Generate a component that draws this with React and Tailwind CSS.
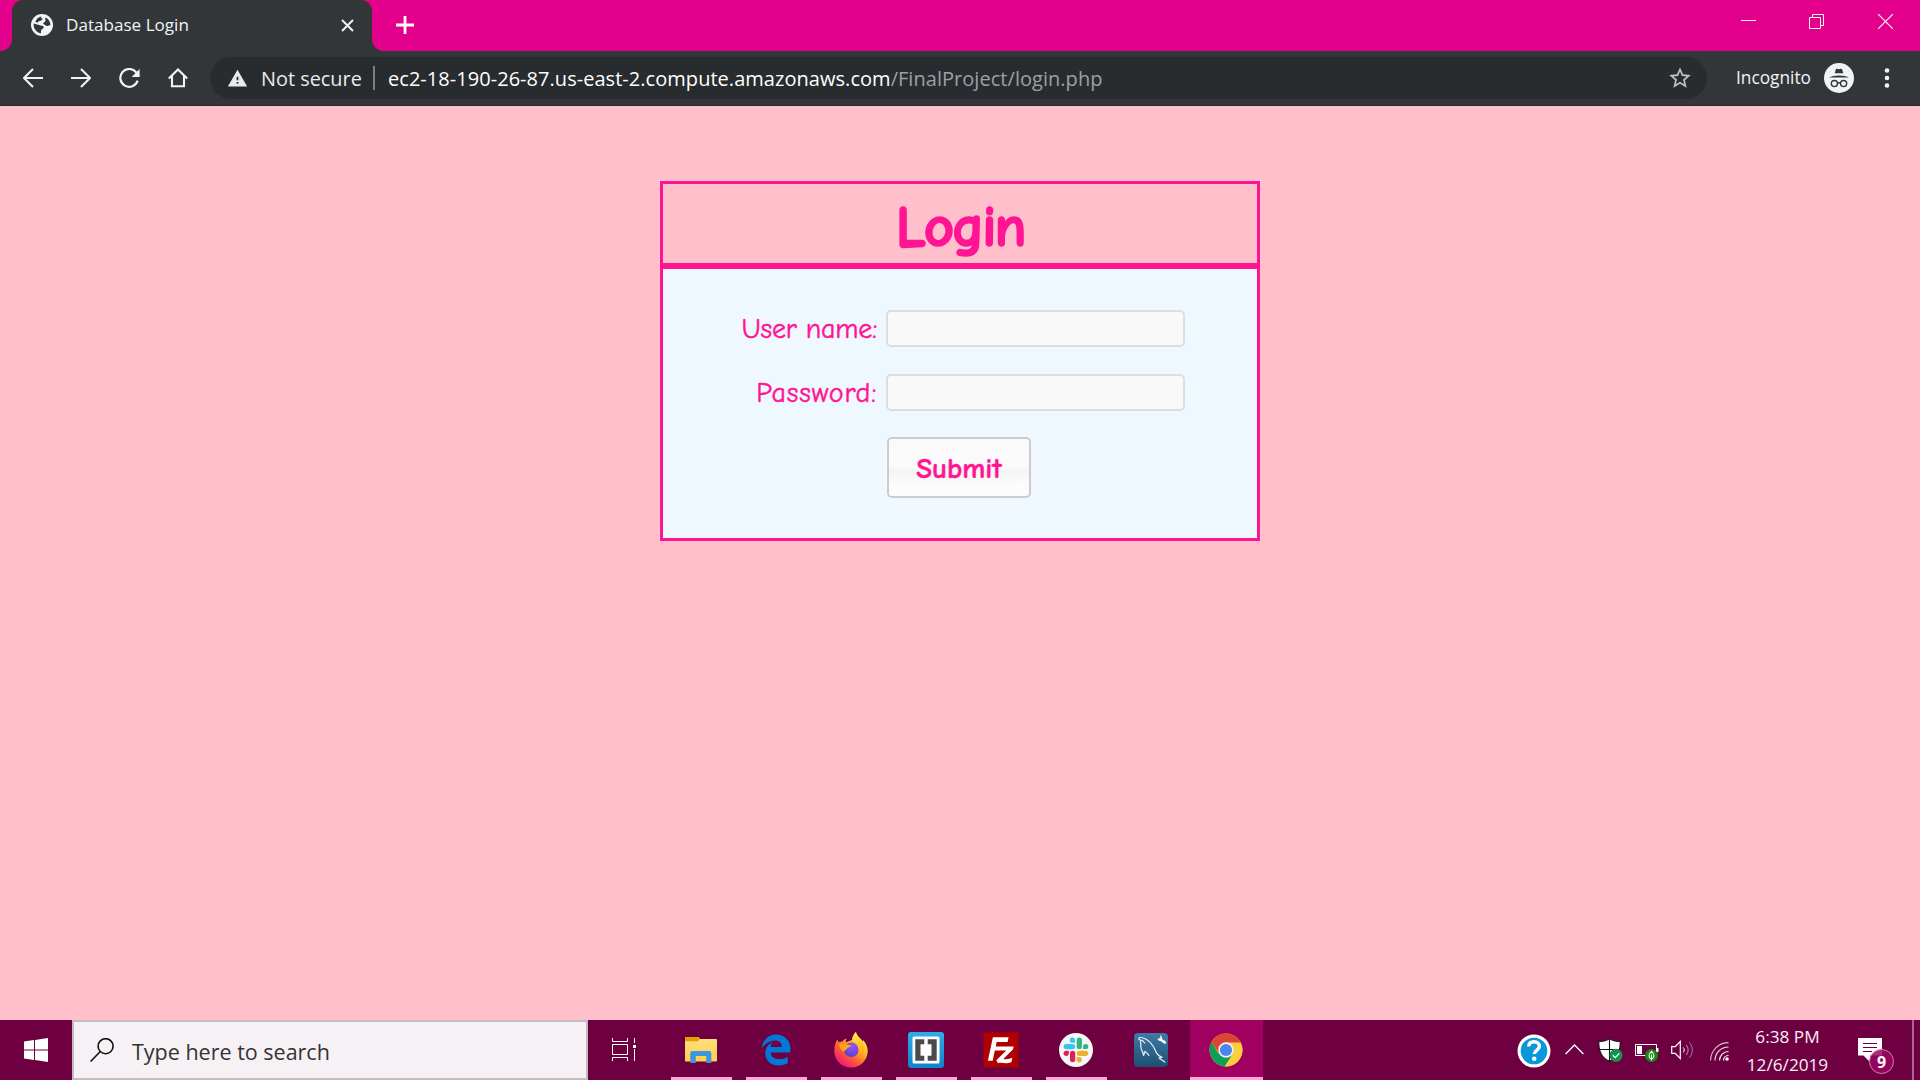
import React from "react";
import { MdStarBorder, MdWarning } from "react-icons/md";
import { FaEdgeLegacy } from "react-icons/fa6";
import { SiFilezilla } from "react-icons/si";

/* ---------- browser chrome icons ---------- */

const Globe = () => (
  <svg width="22" height="22" viewBox="0 0 22 22">
    <circle cx="11" cy="11" r="11" fill="#f1f3f4" />
    <path d="M10.2 2.4c-.3 1.3.2 2 1.4 2.2-.2 1.8-1.500 2.300-3.200 2.300-1 .2-1.200 1.300-2 1.600l-2-.6C5.200 5 7.500 2.900 10.200 2.400Z" fill="#323639" />
    <path d="M2.600 9.600 7 10.700c1.400.3 2.600 1 4.300 1 1.500.2 1.700 1.500.9 2.500-.9 1-2.200 1.300-2.200 2.500v2.600C5.600 19 2.200 14.600 2.600 9.600Z" fill="#323639" />
    <path d="M14.500 3.400c3 1.300 5 4.200 4.900 7.600l-2.400.8c-1.200.4-2 .2-2.600-.5-.6-1.200-2-.6-2.300-1.800.2-1.400 2-1.300 2.400-2.500.3-1.300-.8-2.200 0-3.600Z" fill="#323639" />
  </svg>
);

const Back = () => (
  <svg width="20" height="20" viewBox="0 0 20 20" fill="none" stroke="#f1f3f4" strokeWidth="2.100">
    <path d="M10 .9.900 10l9.100 9.100M1.300 10H20" />
  </svg>
);

const Forward = () => (
  <svg width="20" height="20" viewBox="0 0 20 20" fill="none" stroke="#f1f3f4" strokeWidth="2.100">
    <path d="M10 .9 19.100 10 10 19.100M18.700 10H0" />
  </svg>
);

const Reload = () => (
  <svg width="21" height="20" viewBox="0 0 21 20">
    <path d="M17.400 4.600A8.900 8.900 0 1 0 18.700 12.600" fill="none" stroke="#f1f3f4" strokeWidth="2.200" />
    <path d="M20.600 1v8h-8Z" fill="#f1f3f4" />
  </svg>
);

const Home = () => (
  <svg width="20" height="20" viewBox="0 0 20 20" fill="none" stroke="#f1f3f4" strokeWidth="2.100">
    <path d="M.8 10.500 10 1.500l9.200 9M4 8v10.300h12V8" />
  </svg>
);

const Incognito = () => (
  <svg width="30" height="30" viewBox="0 0 30 30">
    <circle cx="15" cy="15" r="15" fill="#f1f3f4" />
    <path d="M10.700 10.200 11.800 6.500c.2-.7.700-.9 1.300-.7l1.900.5 1.900-.5c.6-.2 1.100 0 1.300.7l1.100 3.700Z" fill="#323639" />
    <path d="M5 14.600c2-1.500 6-2.200 10-2.200s8 .7 10 2.200Z" fill="#323639" />
    <g fill="none" stroke="#323639" strokeWidth="1.300">
      <circle cx="10.400" cy="20.600" r="3.100" />
      <circle cx="19.600" cy="20.600" r="3.100" />
      <path d="M13.500 20.300c1-.7 2-.7 3 0" />
    </g>
  </svg>
);

/* ---------- taskbar icons ---------- */

const WindowsLogo = () => (
  <svg width="24" height="24" viewBox="0 0 24 24" fill="#fff">
    <path d="M0 3.400 10 2v9.500H0ZM11 1.900 24 0v11.500H11ZM0 12.500h10V22L0 20.600ZM11 12.500h13V24l-13-1.900Z" />
  </svg>
);

const SearchGlass = () => (
  <svg width="24" height="24" viewBox="0 0 24 24" fill="none" stroke="#111" strokeWidth="1.600">
    <circle cx="15.600" cy="8.200" r="7.500" />
    <path d="M10.300 13.500.6 23.500" />
  </svg>
);

const TaskView = () => (
  <svg width="25" height="24" viewBox="0 0 25 24" fill="none" stroke="#fff" strokeWidth="1">
    <path d="M.5 0v3.500h15V0M.5 6.500h15v10H.5zM.5 23v-3.500h15V23M22.500 0v5M22.500 11v12" />
    <rect x="21" y="7" width="3" height="3" fill="#fff" stroke="none" />
  </svg>
);

const Explorer = () => (
  <svg width="32" height="26" viewBox="0 0 32 26">
    <defs>
      <linearGradient id="folder" x1="0" y1="0" x2="0" y2="1">
        <stop offset="0" stopColor="#ffe082" />
        <stop offset="1" stopColor="#ffcf4b" />
      </linearGradient>
    </defs>
    <path d="M1 0h12.500l1.500 2h16a1 1 0 0 1 1 1v20.500a1 1 0 0 1-1 1H1a1 1 0 0 1-1-1V1a1 1 0 0 1 1-1Z" fill="url(#folder)" />
    <path d="M1 0h12.500l1.300 2-1.800 2.200H0V1a1 1 0 0 1 1-1Z" fill="#e2a100" />
    <path d="M5.300 26V16a2 2 0 0 1 2-2h17a2 2 0 0 1 2 2v10h-5.100v-7H10.800v7Z" fill="#3a96dd" />
  </svg>
);

const Firefox = () => (
  <svg width="34" height="36" viewBox="0 0 34 36">
    <defs>
      <linearGradient id="ffbody" x1=".85" y1=".1" x2=".2" y2=".95">
        <stop offset="0" stopColor="#fff44f" />
        <stop offset=".35" stopColor="#ffb21f" />
        <stop offset=".65" stopColor="#ff5a36" />
        <stop offset="1" stopColor="#f0117c" />
      </linearGradient>
      <radialGradient id="ffcore" cx=".6" cy=".2" r=".9">
        <stop offset="0" stopColor="#a24bff" />
        <stop offset=".6" stopColor="#6e4be0" />
        <stop offset="1" stopColor="#4a3fb8" />
      </radialGradient>
      <linearGradient id="ffflame" x1="0" y1="0" x2="0" y2="1">
        <stop offset="0" stopColor="#fff44f" />
        <stop offset="1" stopColor="#ff980e" />
      </linearGradient>
    </defs>
    <path d="M3.500 7.200c.2 1.400.6 2.200 1.300 3 1-.6 2.300-.8 3.700-.6 1-1.700 2.500-2.800 4.300-3.200-1 1.300-1.200 2.700-.8 3.800L18 8c.4-3.300 1.800-6.200 4-8 .4 3.200 2.500 4.800 4.800 7 .8.900 1.500 1.900 2 3 .2-.9.100-1.500-.1-2.300 2.900 2.700 5 7 5 11.300C33.700 28 26.500 35.500 17 35.500S.3 28 .3 19c0-4.500 1-8.800 3.200-11.800Z" fill="url(#ffbody)" />
    <circle cx="17.300" cy="17.800" r="7.200" fill="url(#ffcore)" />
    <path d="M5 12.500c4-2 8 .3 12.500.8-.5 2.200-4.300 2-4.500 3.500 0 1.400-2.800 1.200-3.500 3.200C7 18 5.500 15 5 12.500Z" fill="#ffa61c" />
    <path d="M18 9.500C18.300 5.500 19.500 2 22 0c.4 3.200 2.500 4.800 4.800 7 4 4.300 4.300 10.500 1.500 16 .2-7-3-12.500-10.300-13.500Z" fill="url(#ffflame)" />
  </svg>
);

const Brackets = () => (
  <svg width="36" height="36" viewBox="0 0 36 36">
    <defs>
      <linearGradient id="brk" x1="0" y1="0" x2="0" y2="1">
        <stop offset="0" stopColor="#2eaee8" />
        <stop offset="1" stopColor="#0f83c9" />
      </linearGradient>
    </defs>
    <rect width="36" height="36" rx="3" fill="url(#brk)" />
    <rect x="4.500" y="4.500" width="27" height="27" rx="1.500" fill="#fff" />
    <path d="M7.300 7.300h9v5h-3.800v11.400h3.800v5h-9ZM28.700 7.300h-9v5h3.800v11.400h-3.800v5h9Z" fill="#4a4a4a" />
  </svg>
);

const FileZilla = () => (
  <div className="grid size-9 place-items-center bg-[linear-gradient(#fff,#fff)] bg-[length:30px_30px] bg-center bg-no-repeat">
    <SiFilezilla className="size-9 text-[#b00000]" />
  </div>
);

const Slack = () => (
  <svg width="34" height="34" viewBox="0 0 34 34">
    <circle cx="17" cy="17" r="17" fill="#f6f6f6" />
    <g fill="#36c5f0">
      <rect x="4.600" y="11" width="11.500" height="5.200" rx="2.600" />
      <path d="M16 9.800h-2.600A2.600 2.600 0 1 1 16 7.200Z" />
    </g>
    <g fill="#2eb67d">
      <rect x="17.700" y="4.600" width="5.200" height="11.500" rx="2.600" />
      <path d="M24.100 16.100v-2.600a2.600 2.600 0 1 1 2.600 2.600Z" />
    </g>
    <g fill="#ecb22e">
      <rect x="17.700" y="17.700" width="11.500" height="5.200" rx="2.600" />
      <path d="M17.700 24.100h2.600a2.600 2.600 0 1 1-2.600 2.600Z" />
    </g>
    <g fill="#e01e5a">
      <rect x="11" y="17.700" width="5.200" height="11.500" rx="2.600" />
      <path d="M9.800 17.700v2.600a2.600 2.600 0 1 1-2.600-2.600Z" />
    </g>
  </svg>
);

const Workbench = () => (
  <svg width="34" height="34" viewBox="0 0 34 34">
    <defs>
      <linearGradient id="wb" x1="0" y1="0" x2="0" y2="1">
        <stop offset="0" stopColor="#3f7ba5" />
        <stop offset="1" stopColor="#1d5073" />
      </linearGradient>
    </defs>
    <rect width="34" height="34" rx="4" fill="url(#wb)" />
    <g fill="none" stroke="#e6eef4" strokeWidth="1.200" strokeLinecap="round" strokeLinejoin="round">
      <path d="M9.500 8.500C7.500 6.800 5.500 7.500 4.800 6c-.5-1.200.8-1.800 2.500-1.500 5.500.8 8.500 3.500 12 9 1.600 2.700 2.200 5.500 4.400 8 1.300 1.500 3 2 4.300 2.800l-3 .7c1.800 1.400 4.300 2.300 5.800 4.200" />
      <path d="M6.500 8.200c.8 3-.4 6.500 1.200 9 .9 1.600 1.400 2.400 1.900 5.300l1.400-4.200c1.500 1.500 2.700 2.600 3.800 4" />
    </g>
    <circle cx="10.500" cy="9.700" r=".8" fill="#e6eef4" />
    <path d="m26.200 6.200 4.600 3.200" stroke="#fff" strokeWidth="2.600" strokeLinecap="round" />
    <path d="M26 2.300c1.700.5 2.400 2 1.900 3.700-.8 1.700-2.600 2.100-4 1.100l-.2-1.500 1.900.3.900-1.300Z" fill="#fff" />
  </svg>
);

const Chrome = () => (
  <svg width="34" height="34" viewBox="0 0 34 34">
    <circle cx="17" cy="17" r="16.500" fill="#fbc934" />
    <path d="M17 17 9.500 20.800 2.710 8.750A16.500 16.500 0 0 0 15.500 33.430L24 21Z" fill="#0f9d58" />
    <path d="M17 9.400h14.650A16.500 16.500 0 0 1 16.500 33.490L23.600 20.800Z" fill="#fbcf3b" />
    <path d="M2.710 8.750A16.500 16.500 0 0 1 31.650 9.400H17L9.500 13.500l1 7.500Z" fill="#db4437" />
    <circle cx="17" cy="17" r="7.700" fill="#f1f1f1" />
    <circle cx="17" cy="17" r="6.100" fill="#4a86f0" />
  </svg>
);

const Help = () => (
  <svg width="34" height="34" viewBox="0 0 34 34">
    <circle cx="17" cy="17" r="16.500" fill="#fff" />
    <circle cx="17" cy="17" r="13.300" fill="#0a97d9" />
    <path d="M11.700 12.500c.2-3 2.300-4.700 5.300-4.700 3.200 0 5.400 1.800 5.400 4.500 0 3.800-4.900 3.800-5.100 7.700" fill="none" stroke="#fff" strokeWidth="3.400" />
    <circle cx="17.200" cy="24.700" r="2.300" fill="#fff" />
  </svg>
);

const Defender = () => (
  <svg width="25" height="24" viewBox="0 0 25 24">
    <path d="M11.500.6C9 2.700 5 3.600.9 3.400c-.4 8.600 2.300 16.300 10.600 19.800C19.800 19.700 22.500 12 22.100 3.400 18 3.600 14 2.700 11.500.6Z" fill="#fff" stroke="#111" strokeWidth="1" />
    <path d="M11.500.6v22.600M.9 11.500h21.200" stroke="#111" strokeWidth="1.100" />
    <circle cx="18" cy="17.300" r="6.500" fill="#179150" />
    <path d="m14.800 17.300 2.400 2.400 4.200-4.300" fill="none" stroke="#fff" strokeWidth="1.300" />
  </svg>
);

const Battery = () => (
  <svg width="24" height="18" viewBox="0 0 24 18">
    <path d="M.5.500h21v11H.500z" fill="none" stroke="#fff" />
    <path d="M2 2h5v8H2z" fill="#fff" />
    <path d="M22 4h1.500v4H22z" fill="#fff" />
    <circle cx="16.500" cy="11.500" r="6.500" fill="#128a12" />
    <path d="M16.500 7.300c3.300 3 3.300 6 0 8-3.300-2-3.300-5 0-8ZM16.500 10.500v6" fill="none" stroke="#fff" strokeWidth="1.100" />
  </svg>
);

const Speaker = () => (
  <svg width="24" height="20" viewBox="0 0 24 20" fill="none" stroke="#fff">
    <path d="M.7 6.700h3.500L9.300 1.500v17L4.200 13.400H.700Z" strokeWidth="1.200" />
    <path d="M12.300 7.500c1.200 1.500 1.200 3.500 0 5" />
    <path d="M15.200 5c2.500 3 2.500 7 0 10" opacity=".6" />
    <path d="M18.300 2.300c4 4.500 4 11 0 15.400" opacity=".45" />
  </svg>
);

const Wifi = () => (
  <svg width="19" height="19" viewBox="0 0 19 19" fill="none" stroke="#fff" strokeWidth="1.100">
    <path d="M.600 18.500C.6 8.500 8.500.6 18.500.6" opacity=".75" />
    <path d="M5 18.500C5 11 11 5 18.500 5" opacity=".9" />
    <path d="M9.500 18.500c0-5 4-9 9-9" />
    <path d="M13.500 18.500c0-2.800 2.200-5 5-5" />
    <circle cx="17" cy="17" r="1.800" fill="#fff" stroke="none" />
  </svg>
);

const apps = [
  { name: "explorer", icon: <Explorer />, open: true },
  { name: "edge", icon: <FaEdgeLegacy className="size-8 text-[#0078d7]" />, open: true },
  { name: "firefox", icon: <Firefox />, open: true },
  { name: "brackets", icon: <Brackets />, open: true },
  { name: "filezilla", icon: <FileZilla />, open: true },
  { name: "slack", icon: <Slack />, open: true },
  { name: "workbench", icon: <Workbench />, open: false },
];

function TabStrip() {
  return (
    <div className="flex h-[51px] bg-[#e3008c]">
      <div className="flex w-3 bg-[#323639]">
        <div className="w-3 rounded-br-[12px] bg-[#e3008c]" />
      </div>
      <div className="flex w-[360px] items-center rounded-t-[11px] bg-[#323639] pb-px pl-[19px] pr-[18px] text-[17.100px] text-[#f1f3f4]">
        <Globe />
        <span className="ml-[13px] grow whitespace-nowrap">Database Login</span>
        <svg width="13" height="13" viewBox="0 0 13 13" stroke="#f1f3f4" strokeWidth="2">
          <path d="m1 1 11 11M12 1 1 12" />
        </svg>
      </div>
      <div className="flex grow bg-[#323639]">
        <div className="flex grow items-start rounded-bl-[12px] bg-[#e3008c] pl-[24px]">
          <svg className="mt-4" width="18" height="18" viewBox="0 0 18 18" stroke="#fff" strokeWidth="2.800">
            <path d="M9 0v18M0 9h18" />
          </svg>
          <div className="ml-auto mt-[14px] flex items-start pr-[27px]">
            <div className="mr-[53px] mt-[6px] h-px w-[15px] bg-white" />
            <svg className="mr-[54px]" width="15" height="15" viewBox="0 0 15 15" fill="none" stroke="#fff">
              <path d="M.5 3.500h11v11H.500zM3.500 3.500v-3h11v11h-3" />
            </svg>
            <svg width="15" height="15" viewBox="0 0 15 15" stroke="#fff" strokeWidth="1.100">
              <path d="m0 0 15 15M15 0 0 15" />
            </svg>
          </div>
        </div>
      </div>
    </div>
  );
}

function Toolbar() {
  return (
    <div className="flex h-[55px] items-start border-b border-[#25282a] bg-[#323639] pt-[6px] text-[#f1f3f4]">
      <div className="flex h-[42px] w-[210px] items-center gap-7 pb-px pl-[23px]">
        <Back />
        <Forward />
        <Reload />
        <Home />
      </div>
      <div className="flex h-[42px] w-[1497px] items-center rounded-full bg-[#282c2f] pl-[17px] pr-[14px] text-[20px] whitespace-nowrap">
        <MdWarning className="size-[21px] text-[#e8eaed]" />
        <span className="ml-[13px] w-[102px] pt-px text-[19.900px] text-[#e8eaed]">Not secure</span>
        <div className="ml-[10px] h-6 w-[2px] bg-[#7d8083]" />
        <span className="ml-[13px] pt-px tracking-[0.040px] text-white">ec2-18-190-26-87.us-east-2.compute.amazonaws.com<span className="text-[#9aa0a6]">/FinalProject/login.php</span></span>
        <MdStarBorder className="ml-auto size-[26px] text-[#bdc1c6]" />
      </div>
      <div className="flex h-[42px] items-center pl-[29px]">
        <span className="w-[88px] text-[17.300px]">Incognito</span>
        <Incognito />
        <svg className="ml-[30px]" width="6" height="20" viewBox="0 0 6 20" fill="#f1f3f4">
          <circle cx="3" cy="2.500" r="2.300" /><circle cx="3" cy="10" r="2.300" /><circle cx="3" cy="17.500" r="2.300" />
        </svg>
      </div>
    </div>
  );
}

function LoginCard() {
  const field = "h-[37px] w-[299px] rounded-[5px] border-2 border-[#ddd] bg-[#f9f9f9] outline-none";
  return (
    <div className="mx-auto flex h-[360px] w-[600px] flex-col border-[3px] border-[#ff1493] font-['Comic_Neue','Comic_Sans_MS','Lato',sans-serif] text-[#ff1493]">
      <div className="h-[85px] border-b-[6px] border-[#ff1493] pt-[9px] text-center text-[59px] leading-[68px] font-bold tracking-[-2.200px] [-webkit-text-stroke:1.600px_#ff1493]">Login</div>
      <form className="grow bg-[#f0f8ff] pt-[41px] text-[28px] [-webkit-text-stroke:0.500px_#ff1493]">
        <div className="flex h-[37px] items-center">
          <label className="w-[214px] text-right tracking-[-0.200px]">User name:</label>
          <input className={field + " ml-[9px]"} />
        </div>
        <div className="mt-[27px] flex h-[37px] items-center">
          <label className="w-[214px] text-right tracking-[0.800px]">Password:</label>
          <input className={field + " ml-[9px]"} type="password" />
        </div>
        <button type="button" className="mt-[26px] ml-[224px] h-[61px] w-[144px] rounded-[5px] border-2 border-[#ccc] bg-linear-to-b from-[#fafafa] from-50% via-[#f4f4f4] via-55% to-[#fcfcfc] to-80% pt-[3px] text-[29px] font-bold">Submit</button>
      </form>
    </div>
  );
}

function Taskbar() {
  return (
    <div className="flex h-[60px] items-center bg-[#6e0042] text-white">
      <div className="grid h-full w-[72px] place-items-center"><WindowsLogo /></div>
      <div className="flex h-full w-[516px] items-center border-2 border-[#c3bcc0] bg-[#f6f1f5] pl-4 text-[21.500px] text-[#333]">
        <SearchGlass />
        <span className="ml-[18px] pt-[5px]">Type here to search</span>
      </div>
      <div className="w-[76px] pl-6"><TaskView /></div>
      {apps.map((app) => (
        <div key={app.name} className="flex h-full w-[75px] flex-col items-center">
          <div className="grid grow place-items-center pt-[3px] pr-[2px]">{app.icon}</div>
          <div className={app.open ? "h-[3px] w-[61px] bg-[#ffa6dc]" : "h-[3px]"} />
        </div>
      ))}
      <div className="ml-px flex h-full w-[73px] flex-col items-center bg-[#a0005f]">
        <div className="grid grow place-items-center pt-[3px] pr-px"><Chrome /></div>
        <div className="h-[3px] w-full bg-[#ffa6dc]" />
      </div>
      <div className="ml-auto flex h-full items-center">
        <span className="pt-[2px]"><Help /></span>
        <svg className="ml-[14px] mb-[2px]" width="19" height="11" viewBox="0 0 19 11" fill="none" stroke="#fff" strokeWidth="1.300"><path d="m.6 10 8.900-9 8.900 9" /></svg>
        <span className="ml-[14px]"><Defender /></span>
        <span className="mt-[5px] ml-[12px]"><Battery /></span>
        <span className="ml-[12px]"><Speaker /></span>
        <span className="mt-[2px] ml-[15px]"><Wifi /></span>
        <div className="ml-[16px] flex h-full w-[85px] flex-col items-center text-[17.200px] leading-[28px] pt-[3px] text-[#fbeef5]">
          <div>6:38 PM</div>
          <div>12/6/2019</div>
        </div>
        <div className="relative ml-[28px] h-6 w-[54px]">
          <svg width="24" height="24" viewBox="0 0 24 24">
            <path d="M0 0h24v17.500H12L12 24 5.500 17.500H0Z" fill="#fff" />
            <path d="M5 5.500h14M5 9.500h14M5 13.500h9" stroke="#6e0042" />
          </svg>
          <div className="absolute top-[11px] left-[11px] grid size-[25px] place-items-center rounded-full border border-[#d07fb0] bg-[#9a0660]/85 text-[16px] leading-none font-bold">9</div>
        </div>
        <div className="mr-1.5 h-full w-[2px] bg-[#a8668a]" />
      </div>
    </div>
  );
}

export default function App() {
  return (
    <div className="flex h-[1080px] w-[1920px] flex-col overflow-hidden bg-[#ffc0cb] font-['Open_Sans','Noto_Sans',sans-serif]">
      <TabStrip />
      <Toolbar />
      <main className="grow pt-[75px]"><LoginCard /></main>
      <Taskbar />
    </div>
  );
}
